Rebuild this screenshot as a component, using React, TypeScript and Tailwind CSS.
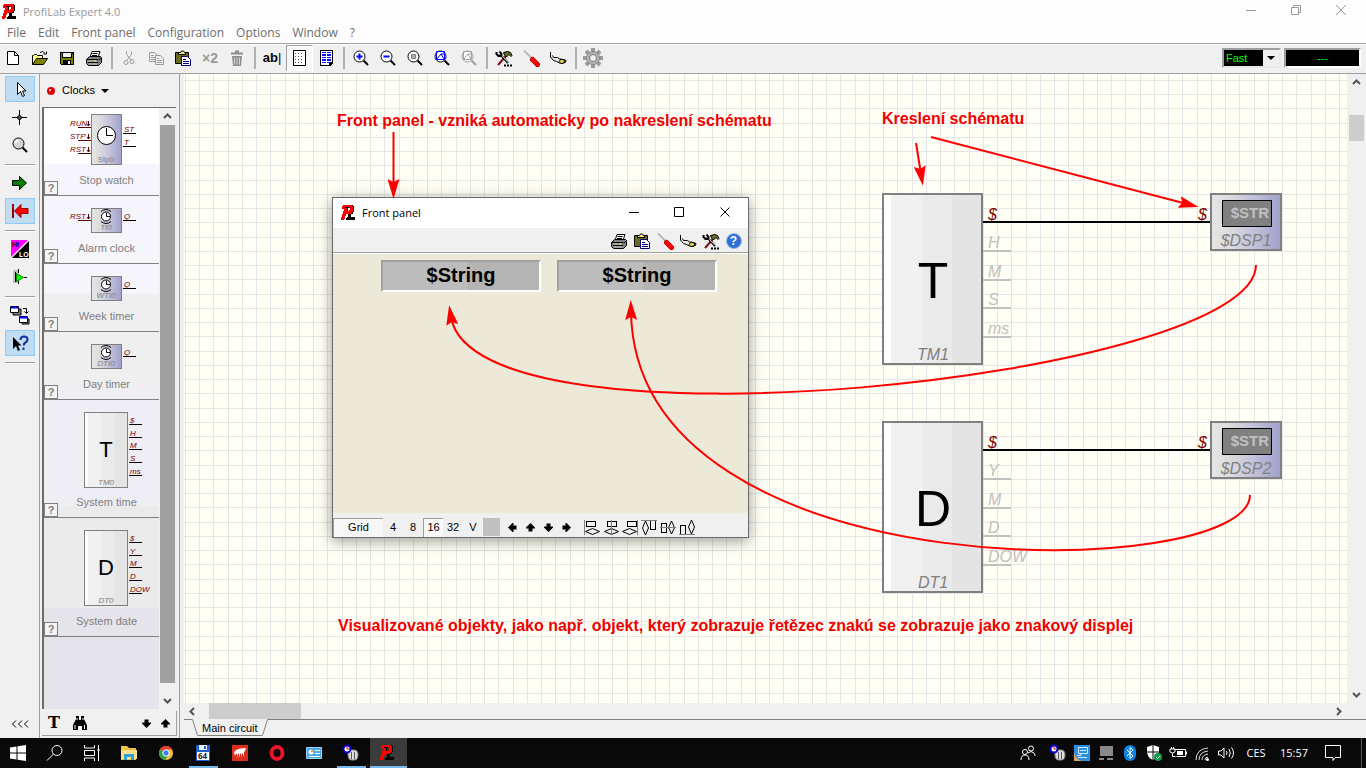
import type { ReactNode } from "react";
import clsx from "clsx";

type IconProps = { children: ReactNode; className?: string; size?: number };

const Icon = ({ children, className, size = 18 }: IconProps) => (
  <svg
    width={size}
    height={size}
    viewBox={`0 0 ${size} ${size}`}
    fill="none"
    aria-hidden="true"
    className={clsx("shrink-0", className)}
  >
    {children}
  </svg>
);

/* ---------- program icons ---------- */

// R = red, K = black
const logoRows = [
  "..RRRRRRRRRK..",
  ".RRRRRRRRRRRK.",
  ".RRRKKKKRRRRK.",
  ".RRRRRK..RRRK.",
  "...RRRK..RRRK.",
  "...RRRK.RRRRK.",
  "..RRRRRRRRRRK.",
  "..RRRRRRRRRK..",
  "..RRRRRRRRKK..",
  ".RRRR..KKK....",
  ".RRRR..KKK....",
  ".RRR...KKK....",
  "RRRR..KKKKKKKK",
  "RRRR.KKKKKKKKK",
  "RRR..KKKKKKKKK",
];

const Logo = () => (
  <Icon size={16}>
    <g shapeRendering="crispEdges">
      {logoRows.map((row, y) =>
        row.split("").map((c, x) =>
          c === "." ? null : (
            <rect
              key={`${x}-${y}`}
              x={x}
              y={y}
              width="1"
              height="1"
              fill={c === "R" ? "#f00" : "#000"}
            />
          )
        )
      )}
    </g>
  </Icon>
);

const NewIcon = () => (
  <Icon>
    <path d="M3.500 2.500h7l4 4v9h-11z" fill="#fff" stroke="#000" />
    <path d="M10.500 2.500v4h4" stroke="#000" />
  </Icon>
);

const OpenIcon = () => (
  <Icon>
    <path d="M1.500 15.500v-9h1l1-1h2l1 1h5v3" fill="#ffff80" stroke="#000" />
    <path d="M1.500 15.500l4-6h11l-4 6z" fill="#808000" stroke="#000" />
    <path d="M9 3.500q3-2.500 5 1m1.500-2v2.500h-3" stroke="#000" />
  </Icon>
);

const SaveIcon = () => (
  <Icon>
    <g shapeRendering="crispEdges">
      <path d="M2 3h14v13H3l-1-1z" fill="#000" />
      <path d="M3 4h1v5h10V5h1v10H3z" fill="#808000" />
      <path d="M5 4h8v4H5z" fill="#f0f0f0" />
      <path d="M5 11h8v5H5z" fill="#000" />
      <path d="M10 12h2v3h-2z" fill="#f0f0f0" />
    </g>
  </Icon>
);

const PrintIcon = () => (
  <Icon>
    <path d="M5 8.500l2-6h8l-2 6" fill="#fff" stroke="#000" />
    <path d="M7.500 4.500h5M7 6.500h5" stroke="#000" />
    <path d="M1.500 10.500l3-3h11l1 1v5l-3 3h-10l-2-2z" fill="#808080" stroke="#000" />
    <path d="M2 10.500h11M3 13.500h10M13.500 11l3-2" stroke="#000" />
    <path d="M3 12h9M4 15h8" stroke="#c8c8c8" />
    <path d="M9 12h2" stroke="#ff0" />
  </Icon>
);

const CutIcon = () => (
  <Icon>
    <path d="M6.500 2.500v3l5 6M11.500 2.500v3l-5 6" stroke="#9a9a9a" />
    <circle cx="6" cy="13.500" r="2" stroke="#9a9a9a" />
    <circle cx="12" cy="12.500" r="2" stroke="#9a9a9a" />
  </Icon>
);

const CopyIcon = () => (
  <Icon>
    <path d="M2.500 3.500h5l3 3v6h-8z" fill="#f0f0f0" stroke="#9a9a9a" />
    <path d="M4 6.500h3M4 8.500h5M4 10.500h5" stroke="#9a9a9a" />
    <path d="M8.500 6.500h5l3 3v6h-8z" fill="#f0f0f0" stroke="#9a9a9a" />
    <path d="M10 9.500h2M10 11.500h5M10 13.500h5" stroke="#9a9a9a" />
  </Icon>
);

const PasteIcon = () => (
  <Icon>
    <path d="M1.500 3.500h13v11h-13z" fill="#6b6b1e" stroke="#000" />
    <path d="M4.500 5.500v-2h2l1-1.500h2l1 1.500h1v2z" fill="#f5e77a" stroke="#000" />
    <path d="M7.500 7.500h6l3 3v6h-9z" fill="#fff" stroke="#000080" />
    <path d="M9 10.500h3M9 12.500h6M9 14.500h6" stroke="#000080" />
  </Icon>
);

const TrashIcon = () => (
  <Icon>
    <path d="M3 4.500h12M7 2.500h4" stroke="#8f8f8f" strokeWidth="2" />
    <path d="M4 7h10l-1 10H5z" fill="#8f8f8f" />
    <path d="M6.500 8.500v7M9 8.500v7M11.500 8.500v7" stroke="#d8d8d8" />
  </Icon>
);

const GridIcon = () => (
  <Icon>
    <path d="M3.500 1.500h12v15h-12z" fill="#fff" stroke="#000" />
    <path
      d="M5 4.500h9M5 7.500h9M5 10.500h9M5 13.500h9"
      stroke="#555"
      strokeDasharray="1 2"
    />
  </Icon>
);

const PagesIcon = () => (
  <Icon>
    <g shapeRendering="crispEdges">
      <path d="M3 1h13v13l-3 3H3z" fill="#000" />
      <path d="M4 2h11v11h-3v3H4z" fill="#fff" />
      <path
        d="M5 3h4v1H5zM10 3h4v1h-4zM5 5h4v2H5zM10 5h4v2h-4zM5 8h4v1H5zM10 8h4v1h-4zM5 10h4v2H5zM10 10h4v2h-4zM5 13h4v1H5zM10 13h2v1h-2z"
        fill="#1010ff"
      />
    </g>
  </Icon>
);

const ZoomIcon = ({ kind }: { kind: "in" | "out" | "sel" | "fit" | "off" | "glass" }) => {
  const line = kind === "off" ? "#a0a0a0" : "#000";
  return (
    <Icon>
      <path d="M11.500 11.500l4.500 4.500" stroke={line} strokeWidth="2" />
      <circle
        cx="7.500"
        cy="7.500"
        r="5.500"
        fill={kind === "glass" ? "#d4d4d4" : "#fff"}
        stroke={line}
      />
      {kind === "in" && <path d="M4.500 7.500h6M7.500 4.500v6" stroke="#00f" strokeWidth="2" />}
      {kind === "out" && <path d="M4.500 7.500h6" stroke="#00f" strokeWidth="2" />}
      {kind === "sel" && <path d="M5.500 5.500h4v4h-4z" fill="#b0b0b0" stroke="#808080" />}
      {(kind === "fit" || kind === "off") && (
        <path
          d="M3.500 2.500h8v8h-8zM4 10l4-5 3 5M8 5h3"
          stroke={kind === "fit" ? "#00f" : "#a0a0a0"}
        />
      )}
      {kind === "glass" && <path d="M4.500 7.500q.5-3 3-3" stroke="#fff" strokeWidth="2" />}
    </Icon>
  );
};

const ToolsIcon = () => (
  <Icon>
    <path d="M11 7l-8 9" stroke="#7a1010" strokeWidth="2" />
    <path d="M5 5l8 9" stroke="#000" strokeWidth="2" />
    <path d="M6 5.500l7 8" stroke="#d0d0d0" />
    <path d="M1.500 3v2l2 2h2l1-2-2-2.500" stroke="#000" strokeWidth="2" />
    <path d="M8.500 3.500l4-1 3 1 1.500 3-1 1-2-2-2.500 2.500-2-2z" fill="#6b6b1e" stroke="#000" />
    <path d="M9 16.500h8" stroke="#000" strokeWidth="2" strokeDasharray="2 1" />
  </Icon>
);

const ScrewdriverIcon = () => (
  <Icon>
    <path d="M2 1.500l8 8" stroke="#b8b8b8" strokeWidth="2" />
    <path d="M1.500 3l7 7" stroke="#ececec" />
    <path d="M10.500 10.500l5 5" stroke="#900000" strokeWidth="5" strokeLinecap="round" />
    <path d="M10.500 10.500l5 5" stroke="#f00" strokeWidth="4" strokeLinecap="round" />
  </Icon>
);

const PlugIcon = () => (
  <Icon>
    <path
      d="M1.500 3v5l3 3.500 3 1 4 2 5-1 .5-2-2.500-1-4-.5-2-1.500h-4l-1-2"
      fill="#e8e8e8"
      stroke="#000"
    />
    <path d="M10 12.500l2-2.500 4 1.500-1 2.500-3 .5z" fill="#e4d64a" stroke="#000" />
  </Icon>
);

const GearIcon = () => (
  <Icon size={20}>
    <path d="M10 0v20M0 10h20M3 3l14 14M17 3L3 17" stroke="#9a9a9a" strokeWidth="4" />
    <circle cx="10" cy="10" r="6.500" fill="#b4b4b4" stroke="#8a8a8a" />
    <circle cx="10" cy="10" r="3.500" fill="#f0f0f0" stroke="#777" />
  </Icon>
);

const HelpIcon = () => (
  <span className="flex size-4 items-center justify-center rounded-full border border-[#9ab6e4] bg-[#2f6fd6] text-xs font-bold text-white">
    ?
  </span>
);

/* ---------- tool strip ---------- */

const strip: { name: string; icon: ReactNode; on?: boolean }[][] = [
  [
    {
      name: "Select",
      on: true,
      icon: (
        <Icon>
          <path d="M6.500 2.500v12l3-3 2 5 2-1-2-4.500h3.500z" fill="#fff" stroke="#000" />
        </Icon>
      ),
    },
    {
      name: "Crosshair",
      icon: (
        <Icon>
          <path d="M8.500 2v15M1 9.500h15" stroke="#000" />
          <circle cx="8.500" cy="9.500" r="2" fill="#555" stroke="#000" />
        </Icon>
      ),
    },
    { name: "Zoom", icon: <ZoomIcon kind="glass" /> },
  ],
  [
    {
      name: "Run",
      icon: (
        <Icon>
          <path d="M1.500 6.500h7v-4l7 6.500-7 6.500v-4h-7z" fill="#008000" stroke="#000" />
        </Icon>
      ),
    },
    {
      name: "Stop",
      on: true,
      icon: (
        <Icon>
          <path d="M2 2v14" stroke="#900" strokeWidth="2" />
          <path d="M17 6.500h-7v-4L3.500 9l6.500 6.500v-4h7z" fill="#f00" stroke="#900" />
        </Icon>
      ),
    },
  ],
  [
    {
      name: "High low",
      icon: (
        <Icon>
          <path d="M0 0h17L0 17z" fill="#f0f" />
          <path d="M18 1v17H1z" fill="#000" />
          <text x="1" y="7" fontSize="7" fontWeight="bold" fill="#000">HI</text>
          <text x="8" y="17" fontSize="7" fontWeight="bold" fill="#fff">LO</text>
        </Icon>
      ),
    },
    {
      name: "Probe",
      icon: (
        <Icon>
          <path d="M2 2h5v13H2z" fill="#c0c0c0" />
          <path d="M7.500 1v4M7.500 13v3M4.500 4v10M13 9.500h3" stroke="#000" />
          <path d="M5.500 5.500l7 4-7 4z" fill="#0f0" stroke="#008000" />
        </Icon>
      ),
    },
  ],
  [
    {
      name: "Switch windows",
      icon: (
        <Icon size={20}>
          <path d="M3 4h8v6H3z" fill="#808080" stroke="#000" />
          <path d="M.500 1.500h8v6h-8z" fill="#fff" stroke="#000" />
          <path d="M1 2.500h7" stroke="#00f" strokeWidth="2" />
          <path d="M13 3.500h3.500V8m-2-1.500l2 2 2-2" stroke="#000" />
          <path d="M12 14h7v5h-7z" fill="#808080" stroke="#000" />
          <path d="M9.500 11.500h8v6h-8z" fill="#fff" stroke="#000" />
          <path d="M10 12.500h7" stroke="#00f" strokeWidth="2" />
        </Icon>
      ),
    },
    {
      name: "Context help",
      on: true,
      icon: (
        <Icon>
          <path d="M2 3v12l3-3 2 5 2-1-2-4.500h3.500z" fill="#000" />
          <path
            d="M9.500 6q0-3.500 3.500-3.500t3.500 3q0 2-2 3t-1.500 3M12.500 13.500v2.500"
            stroke="#1c2fa0"
            strokeWidth="2"
          />
        </Icon>
      ),
    },
  ],
];

const ToolStrip = () => (
  <nav
    aria-label="Tools"
    className="flex w-10 shrink-0 flex-col items-center border-r border-[#a0a0a0] pt-[2px]"
  >
    {strip.map((group, i) => (
      <div key={i} className="flex w-full flex-col items-center gap-[2px]">
        {group.map(({ name, icon, on }) => (
          <button
            key={name}
            aria-label={name}
            aria-pressed={on}
            className={clsx(
              "flex h-[26px] w-[30px] items-center justify-center border",
              on ? "border-[#90c8f6] bg-[#c0dcf3]" : "border-transparent"
            )}
          >
            {icon}
          </button>
        ))}
        <hr className="my-1 w-[30px] border-t border-b border-t-[#a0a0a0] border-b-white" />
      </div>
    ))}
    <button className="mt-auto mb-[5px]" aria-label="Collapse">
      <Icon>
        <path
          d="M5 5.500L1.500 9 5 12.500M11 5.500L7.500 9l3.500 3.500M17 5.500L13.500 9l3.500 3.500"
          stroke="#000"
        />
      </Icon>
    </button>
  </nav>
);

/* ---------- component palette ---------- */

type Part = {
  name: string;
  id: string;
  kind: "stop" | "timer" | "table";
  height: number;
  letter?: string;
  left?: string[];
  right: string[];
};

const parts: Part[] = [
  { name: "Stop watch", id: "Stp0", kind: "stop", height: 61, left: ["RUN", "STP", "RST"], right: ["ST", "T"] },
  { name: "Alarm clock", id: "TI0", kind: "timer", height: 41, left: ["RST"], right: ["Q"] },
  { name: "Week timer", id: "WTI0", kind: "timer", height: 41, right: ["Q"] },
  { name: "Day timer", id: "DTI0", kind: "timer", height: 41, right: ["Q"] },
  { name: "System time", id: "TM0", kind: "table", height: 91, letter: "T", right: ["$", "H", "M", "S", "ms"] },
  { name: "System date", id: "DT0", kind: "table", height: 92, letter: "D", right: ["$", "Y", "M", "D", "DOW"] },
];

const Gradients = () => (
  <defs>
    <linearGradient id="violet">
      <stop offset="0" stopColor="#e6e6e6" />
      <stop offset=".25" stopColor="#dcdcde" />
      <stop offset=".6" stopColor="#c2c2da" />
      <stop offset="1" stopColor="#a0a0cc" />
    </linearGradient>
    <linearGradient id="silver">
      <stop offset=".08" stopColor="#fff" />
      <stop offset=".08" stopColor="#f0f0f0" />
      <stop offset=".4" stopColor="#f0f0f0" />
      <stop offset=".4" stopColor="#eaeaea" />
      <stop offset=".7" stopColor="#eaeaea" />
      <stop offset=".7" stopColor="#e4e4e4" />
    </linearGradient>
  </defs>
);

const PartSymbol = ({ part }: { part: Part }) => {
  const table = part.kind === "table";
  const stop = part.kind === "stop";
  const first = stop ? 25 : 24;
  const pinX = table ? 85 : 79;
  return (
    <svg width="114" height={part.height} aria-hidden="true" className="shrink-0 text-[8px] italic">
      {table ? (
        <rect x="40.5" y="12.5" width="43" height="75" fill="url(#silver)" stroke="#808080" />
      ) : (
        <rect
          x="47.5"
          y={stop ? 6.5 : 12.5}
          width="30"
          height={stop ? 50 : 24}
          fill="url(#violet)"
          stroke="#808080"
        />
      )}
      {stop && (
        <>
          <circle cx="62.5" cy="27.5" r="9" fill="#fff" stroke="#000" />
          <path d="M62.500 20v7.500H69" stroke="#000" fill="none" />
        </>
      )}
      {part.kind === "timer" && (
        <>
          <path d="M57 15.500q5-4 10 0M57 25.500q5 4 10 0" stroke="#000" fill="none" />
          <circle cx="62" cy="20.5" r="4.5" fill="#fff" stroke="#000" />
          <path d="M62.500 17v3.500H66" stroke="#000" fill="none" />
        </>
      )}
      {table && (
        <text x="62" y="57" fontSize="22" textAnchor="middle" className="not-italic">
          {part.letter}
        </text>
      )}
      <text
        x="62"
        y={table ? 85 : stop ? 54 : 34}
        textAnchor="middle"
        fill="#808080"
        className={stop ? "not-italic" : ""}
      >
        {part.id}
      </text>
      {part.left?.map((pin, i) => {
        const y = (stop ? 19 : 24) + i * 13;
        return (
          <g key={pin}>
            <text x="26" y={y - 1} fill="#800000">{pin}</text>
            <path
              d={`M34 ${y + 0.5}h13M44.500 ${y - 6}v5m-1.500-2l1.500 2 1.500-2`}
              stroke="#500"
              fill="none"
            />
          </g>
        );
      })}
      {part.right.map((pin, i) => {
        const y = first + i * 13 - (table && i > 1 ? 1 : 0);
        return (
          <g key={pin}>
            <text x={pinX + 1} y={y - 1} fill="#800000">{pin}</text>
            <path d={`M${pinX} ${y + 0.5}h13`} stroke="#000" />
          </g>
        );
      })}
    </svg>
  );
};

const Chevron = ({ turn }: { turn?: string }) => (
  <svg width="9" height="9" viewBox="0 0 9 9" fill="none" className={turn} aria-hidden="true">
    <path d="M1 6l3.500-3.500L8 6" stroke="#555" strokeWidth="2" />
  </svg>
);

const BlockArrow = ({ turn }: { turn?: string }) => (
  <svg width="9" height="9" viewBox="0 0 9 9" className={turn} aria-hidden="true">
    <path d="M4.500 0L9 4.500V5.500H6.500V8.500h-4v-3H0v-1z" fill="#000" />
  </svg>
);

const Palette = () => (
  <aside className="flex w-[140px] shrink-0 flex-col border-r border-[#a0a0a0] pl-[2px]">
    <button className="flex h-[33px] items-center pl-1 text-[11px]">
      <svg width="10" height="10" aria-hidden="true">
        <circle cx="5" cy="5" r="4" fill="#e00000" />
        <circle cx="4" cy="4" r="1" fill="#fff" />
      </svg>
      <span className="ml-[6px]">Clocks</span>
      <span className="ml-[6px] border-x-4 border-t-4 border-x-transparent border-t-black" />
    </button>
    <div className="mr-[3px] flex min-h-0 flex-1 border-t border-l-2 border-[#6d6d6d]">
      <ul className="min-w-0 flex-1 bg-[linear-gradient(#fff_56px,#f5f5fb_56px,#f5f5fb_186px,#efefef_186px,#efefef_278px,#eeeef4_278px,#eeeef4_398px,#ebebeb_398px,#ebebeb_500px,#e4e4ea_500px)]">
        {parts.map((part) => (
          <li key={part.id} className="flex flex-col border-b border-[#808080]">
            <PartSymbol part={part} />
            <div className="flex h-[26px] items-end">
              <button
                aria-label={`About ${part.name}`}
                className="flex size-[14px] shrink-0 items-center justify-center border border-[#808080] bg-[#f4f4f4] text-[11px] font-bold text-[#808080]"
              >
                ?
              </button>
              <span className="flex-1 pr-1 pb-[7px] text-center text-[11px] leading-4 whitespace-nowrap text-[#808080]">
                {part.name}
              </span>
            </div>
          </li>
        ))}
      </ul>
      <div className="flex w-[17px] flex-col items-center border-x border-[#f0f0f0]">
        <button aria-label="Scroll up" className="flex h-[17px] items-center"><Chevron /></button>
        <div className="w-full flex-1 bg-[#a0a0a0]" />
        <div className="h-[9px]" />
        <button aria-label="Scroll down" className="flex h-[17px] items-center">
          <Chevron turn="rotate-180" />
        </button>
      </div>
    </div>
    <div className="my-[2px] mr-[2px] flex h-[25px] items-center border-r border-b border-[#a0a0a0] pl-[2px]">
      <button className="w-5 font-['DejaVu_Serif',serif] text-base leading-5 font-bold">T</button>
      <button aria-label="Find" className="ml-2">
        <Icon size={16}>
          <path d="M4 1h3v4h2V1h3v3l3 6v5h-5v-4H6v4H1v-5l3-6z" fill="#000" />
          <path d="M5 3v2M11 3v2M3 10v4M12.500 10v4" stroke="#fff" />
        </Icon>
      </button>
      <button aria-label="Next" className="mr-[10px] ml-auto"><BlockArrow turn="rotate-180" /></button>
      <button aria-label="Previous" className="mr-[6px]"><BlockArrow /></button>
    </div>
  </aside>
);

/* ---------- front panel window ---------- */

const AlignIcon = ({ kind }: { kind: number }) => (
  <Icon size={17}>
    {kind < 3 ? (
      <>
        <rect x={[2.5, 4.5, 5.5][kind]} y="2.5" width="9" height="5" stroke="#000" />
        <path
          d={["M1.500 12.500l7-3 7 3-7 3z", "M1.500 12.500l7-3 7 3-7 3z", "M.5 12.500l7-3 7 3-7 3z"][kind]}
          stroke="#000"
        />
        <path d={["M.5 1v15", "M8.500 1v15", "M15.500 1v15"][kind]} stroke="#808080" />
      </>
    ) : (
      <>
        <path
          d={["M4.500 2l3 7-3 7-3-7z", "M11.500 2l3 6.500-3 6.500-3-6.500z", "M12.500 1l3 7-3 7-3-7z"][kind - 3]}
          stroke="#000"
        />
        <rect
          x={[9.5, 1.5, 1.5][kind - 3]}
          y={[1.5, 4.5, 6.5][kind - 3]}
          width="5"
          height="9"
          stroke="#000"
        />
        <path d={["M0 1.500h16", "M0 8.500h16", "M0 15.500h16"][kind - 3]} stroke="#808080" />
      </>
    )}
  </Icon>
);

const panelTools: { name: string; icon: ReactNode }[] = [
  { name: "Print", icon: <PrintIcon /> },
  { name: "Paste", icon: <PasteIcon /> },
  { name: "Setup", icon: <ScrewdriverIcon /> },
  { name: "Connect", icon: <PlugIcon /> },
  { name: "Tools", icon: <ToolsIcon /> },
  { name: "Help", icon: <HelpIcon /> },
];

const FrontPanel = () => (
  <section
    aria-label="Front panel"
    className="absolute top-[123px] left-[148px] flex h-[341px] w-[417px] flex-col border border-[#6a6a6a] bg-[#ece9d8] shadow-[0_3px_14px_rgba(0,0,0,0.4)]"
  >
    <header className="flex h-[30px] shrink-0 items-center bg-white pl-2">
      <Logo />
      <h2 className="ml-[5px] font-['Open_Sans',sans-serif] text-[11px]">Front panel</h2>
      <div className="ml-auto flex pb-[2px]">
        <button aria-label="Minimize" className="flex w-[46px] justify-center">
          <Icon size={11}><path d="M0 5.500h10" stroke="#000" /></Icon>
        </button>
        <button aria-label="Maximize" className="flex w-[45px] justify-center">
          <Icon size={11}><path d="M.5.5h9v9H.5z" stroke="#000" /></Icon>
        </button>
        <button aria-label="Close" className="flex w-[46px] justify-center">
          <Icon size={11}><path d="M.5.5l9 9M9.500.5l-9 9" stroke="#000" /></Icon>
        </button>
      </div>
    </header>
    <div className="flex h-[25px] shrink-0 items-center justify-end border-b border-[#a0a0a0] bg-[#f0f0f0] pt-px pr-[3px]">
      {panelTools.map(({ name, icon }) => (
        <button key={name} aria-label={name} className="flex w-[23px] justify-center">
          {icon}
        </button>
      ))}
    </div>
    <div className="flex flex-1 items-start gap-4 border-t border-white pt-[6px] pl-12">
      {[1, 2].map((n) => (
        <output
          key={n}
          className="flex h-8 w-40 items-center justify-center border-2 border-t-[#a0a0a0] border-r-white border-b-white border-l-[#a0a0a0] bg-[linear-gradient(90deg,#bcbcbc_54%,#b4b4b4_54%)] pb-[2px] text-xl font-bold"
        >
          $String
        </output>
      ))}
    </div>
    <footer className="flex h-6 shrink-0 items-center bg-[#f0f0f0] pt-1 text-[11px]">
      <button className="h-[19px] w-[50px] border-t border-l border-[#a0a0a0] bg-[#f8f8f8]">Grid</button>
      {["4", "8", "16", "32", "V"].map((step) => (
        <button
          key={step}
          className={clsx(
            "h-[19px] w-5",
            step === "16" && "border-t border-l border-[#a0a0a0] bg-[#f8f8f8]"
          )}
        >
          {step}
        </button>
      ))}
      <span className="mr-[3px] h-[18px] w-[17px] bg-[#c0c0c0]" />
      {["-rotate-90", "rotate-0", "rotate-180", "rotate-90"].map((turn) => (
        <button key={turn} aria-label="Move" className="flex w-[18px] justify-center">
          <BlockArrow turn={turn} />
        </button>
      ))}
      <div className="ml-2 flex">
        {[0, 1, 2, 3, 4, 5].map((kind) => (
          <button key={kind} aria-label="Align" className="flex w-[19px] justify-center">
            <AlignIcon kind={kind} />
          </button>
        ))}
      </div>
    </footer>
  </section>
);

/* ---------- schematic ---------- */

const blocks = [
  { y: 120, letter: "T", id: "TM1", display: "$DSP1", pins: ["H", "M", "S", "ms"] },
  { y: 348, letter: "D", id: "DT1", display: "$DSP2", pins: ["Y", "M", "D", "DOW"] },
];

const Schematic = () => (
  <svg className="absolute inset-0 h-full w-full" role="img" aria-label="Circuit">
    <Gradients />
    <defs>
      <pattern id="grid" x="1" y="6" width="57" height="57" patternUnits="userSpaceOnUse">
        <path
          d="M.5 0v57M14.500 0v57M28.500 0v57M43.500 0v57M0 .5h57M0 14.500h57M0 28.500h57M0 43.500h57"
          stroke="#e5e5e5"
        />
      </pattern>
    </defs>
    <rect width="100%" height="100%" fill="url(#grid)" />
    {blocks.map(({ y, letter, id, display, pins }) => (
      <g key={id} transform={`translate(698 ${y - 1})`} fontSize="16">
        <rect x="1" y="1" width="99" height="170" fill="url(#silver)" stroke="#808080" strokeWidth="2" />
        <text x="51" y="105" fontSize="50" textAnchor="middle">{letter}</text>
        <text x="51" y="167" textAnchor="middle" fill="#808080" fontStyle="italic">{id}</text>
        <path d="M101 29h228" stroke="#000" strokeWidth="2" />
        <text x="106" y="27" fill="#800000" fontStyle="italic">$</text>
        <text x="316" y="27" fill="#800000" fontStyle="italic">$</text>
        {pins.map((pin, i) => (
          <g key={pin}>
            <path d={`M101 ${58 + Math.round(i * 28.5)}h28`} stroke="#c0c0c0" strokeWidth="2" />
            <text x="106" y={55 + Math.round(i * 28.5)} fill="#c0c0c0" fontStyle="italic">{pin}</text>
          </g>
        ))}
        <rect x="329" y="1" width="70" height="56" fill="url(#violet)" stroke="#808080" strokeWidth="2" />
        <rect x="340.5" y="7.5" width="49" height="26" fill="#808080" stroke="#000" />
        <text x="387" y="25" fontSize="15" fontWeight="bold" textAnchor="end" fill="#c0c0c0">$STR</text>
        <text x="364" y="53" textAnchor="middle" fill="#808080" fontStyle="italic">{display}</text>
      </g>
    ))}
  </svg>
);

const Notes = () => (
  <svg
    className="pointer-events-none absolute inset-0 h-full w-full"
    fontSize="16"
    fontWeight="bold"
    fill="#f00000"
  >
    <defs>
      <marker
        id="head"
        markerWidth="20"
        markerHeight="12"
        refX="8"
        refY="6"
        orient="auto"
        markerUnits="userSpaceOnUse"
      >
        <path d="M0 0l20 6-20 6 3-6z" fill="#f00" />
      </marker>
    </defs>
    <g transform="translate(-184 -74)">
      <text x="337" y="126">Front panel - vzniká automaticky po nakreslení schématu</text>
      <text x="882" y="124">Kreslení schématu</text>
      <text x="338" y="631">
        Visualizované objekty, jako např. objekt, který zobrazuje řetězec znakú se zobrazuje jako znakový displej
      </text>
      <g fill="none" stroke="#f00" strokeWidth="2">
        <path d="M393.500 132V187" markerEnd="url(#head)" />
        <path d="M916 143L921 174" markerEnd="url(#head)" />
        <path d="M931 137L1187 204" markerEnd="url(#head)" />
        <path d="M1256 265C1256 378 474 461 451 317" markerEnd="url(#head)" />
        <path d="M1250 495C1250 582 636 596 631 312" markerEnd="url(#head)" />
      </g>
    </g>
  </svg>
);

/* ---------- taskbar ---------- */

const PeopleIcon = () => (
  <Icon>
    <g stroke="#fff">
      <circle cx="6" cy="8" r="2.500" />
      <path d="M2 16q0-5 4-5t4 5" />
      <circle cx="12" cy="4.500" r="2.500" />
      <path d="M9 9q3-3 6 0 1 1 1 3" />
    </g>
  </Icon>
);

const MouseIcon = () => (
  <Icon>
    <path d="M6 9q0-3 3-3h3q4 0 4 5t-4 5h-2q-4 0-4-5z" fill="#ddd" stroke="#888" />
    <path d="M9.500 8v7M12.500 8v7" stroke="#555" />
    <circle cx="5" cy="5" r="3.500" fill="#fff" stroke="#0000d0" strokeWidth="2" />
    <path d="M5 2.500V5h2.500" stroke="#d00" />
  </Icon>
);

const tasks: { name: string; icon: ReactNode; open?: boolean; active?: boolean }[] = [
  {
    name: "Start",
    icon: (
      <Icon>
        <path
          d="M1 3.500L7.500 2.500V8.500H1zM8.500 2.300L17 1v7.500H8.500zM1 9.500h6.500v6L1 14.500zM8.500 9.500H17V17l-8.500-1.300z"
          fill="#fff"
        />
      </Icon>
    ),
  },
  {
    name: "Search",
    icon: (
      <Icon>
        <circle cx="11" cy="6.500" r="5" stroke="#fff" />
        <path d="M7.500 10L1 16.500" stroke="#fff" />
      </Icon>
    ),
  },
  {
    name: "Task view",
    icon: (
      <Icon>
        <path
          d="M1.500 1v3h10V1M1.500 17v-3h10v3M1.500 6.500h10v5h-10zM15.500 1v16M14 6h3"
          stroke="#fff"
        />
      </Icon>
    ),
  },
  {
    name: "Explorer",
    icon: (
      <Icon>
        <path d="M1 2h6l2 2h7v12H1z" fill="#f0c14b" />
        <path d="M1 6h16v9H1z" fill="#ffe08a" />
        <path d="M4 16v-6h10v6h-3v-3H7v3z" fill="#2f9fdb" />
      </Icon>
    ),
  },
  {
    name: "Chrome",
    icon: (
      <Icon>
        <circle cx="9" cy="9" r="7" fill="#fbc02d" />
        <path d="M9 9L2.900 5.500A7 7 0 0 1 15.100 5.500H9z" fill="#e53935" />
        <path d="M9 9l-6.100-3.500A7 7 0 0 0 8.500 16l3-5.500z" fill="#2e9e4f" />
        <circle cx="9" cy="9" r="3.200" fill="#3b7ded" stroke="#fff" />
      </Icon>
    ),
  },
  {
    name: "Commander",
    open: true,
    icon: (
      <Icon>
        <path d="M2 1h14v16H2z" fill="#1f5fd0" />
        <path d="M5 1h8v5H5z" fill="#e8eefc" />
        <path d="M10 2h2v3h-2z" fill="#1f5fd0" />
        <path d="M3 8h12v8H3z" fill="#fff" />
        <text x="4" y="15" fontSize="8" fontWeight="bold" fill="#222">64</text>
      </Icon>
    ),
  },
  {
    name: "Editor",
    icon: (
      <Icon>
        <path d="M1 1h16v16H1z" fill="#dc2d1e" />
        <path
          d="M3 8q3-4 12-4l-1 3-1 1v5l-1-3-1-1v4l-1-3-1-1v5l-1-4-1-1v5l-1-4H5l-1 2z"
          fill="#fff"
        />
      </Icon>
    ),
  },
  {
    name: "Opera",
    icon: (
      <Icon>
        <ellipse cx="9" cy="9" rx="5.500" ry="6" stroke="#e8152a" strokeWidth="4" />
      </Icon>
    ),
  },
  {
    name: "Control panel",
    icon: (
      <Icon>
        <path d="M1.500 3.500h15v11h-15z" fill="#4aa8e8" stroke="#9ad4fa" />
        <circle cx="6" cy="8" r="2.500" fill="#fff" />
        <path d="M6 8V5.500A2.500 2.500 0 0 1 8.500 8z" fill="#f5a623" />
        <path d="M10 6.500h5M10 9.500h5M4 12.500h11" stroke="#fff" />
      </Icon>
    ),
  },
  { name: "Recorder", open: true, icon: <MouseIcon /> },
  { name: "ProfiLab", open: true, active: true, icon: <Logo /> },
];

const tray: { name: string; icon: ReactNode }[] = [
  { name: "Recorder", icon: <MouseIcon /> },
  {
    name: "Graphics",
    icon: (
      <Icon>
        <path d="M1 1h16v16H1z" fill="#2b8fe0" />
        <path d="M5.500 3.500h9v6h-9zM7 6.500h6M8 9.500v2h-4M5 13.500h9" stroke="#cfeaff" />
        <path d="M1 8q1 7 8 9H1z" fill="#e0a560" />
      </Icon>
    ),
  },
  {
    name: "Display",
    icon: (
      <Icon>
        <path d="M3 2h13v10H3zM2 14h5v2H2zM10 14h6v2h-6z" fill="#8a8a8a" />
      </Icon>
    ),
  },
  {
    name: "Bluetooth",
    icon: (
      <Icon>
        <rect x="3" y="1" width="12" height="16" rx="6" fill="#0a84e8" />
        <path d="M6 6l6 6-3 2.500v-11l3 2.500-6 6" stroke="#fff" />
      </Icon>
    ),
  },
  {
    name: "Security",
    icon: (
      <Icon>
        <path d="M8 1l6 2v5q0 5-6 8-6-3-6-8V3z" fill="#fff" />
        <path d="M8 1v15M2 8h12" stroke="#0b0b0b" />
        <circle cx="13" cy="13" r="4" fill="#12994a" />
        <path d="M11 13l1.500 1.500L15 12" stroke="#fff" />
      </Icon>
    ),
  },
  {
    name: "Battery",
    icon: (
      <Icon>
        <path
          d="M5.500 5.500h11v7h-9M1 5h5v3q-2.500 2-5 0zM2.500 3v2M4.500 3v2M3.500 9v3.500h3M17.500 7.500v3"
          stroke="#fff"
        />
        <path d="M8 7h6v4H8z" fill="#fff" />
      </Icon>
    ),
  },
  {
    name: "Network",
    icon: (
      <Icon>
        <path d="M3 16Q3 5 15 4M6 16q0-8 9-9M9 16q0-5 6-6M12 16q0-3 3-3" stroke="#ddd" />
        <circle cx="14.500" cy="15.500" r="1.500" fill="#fff" />
      </Icon>
    ),
  },
  {
    name: "Volume",
    icon: (
      <Icon>
        <path
          d="M1.500 7v4H4l3 3V4L4 7zM9.500 7q1 2 0 4M12 5q2.500 4 0 8M14.500 3.500q4 5.500 0 11"
          stroke="#fff"
        />
      </Icon>
    ),
  },
];

const Taskbar = () => (
  <footer className="flex h-[30px] shrink-0 items-stretch bg-[#090909] font-['Open_Sans',sans-serif] text-[11px] text-white">
    {tasks.map(({ name, icon, open, active }) => (
      <button
        key={name}
        aria-label={name}
        className={clsx("relative flex w-[37px] items-center justify-center pr-px", active && "bg-[#3b3b3b]")}
      >
        {icon}
        {open && (
          <span
            className={clsx("absolute bottom-0 h-[2px] bg-[#76b9ed]", active ? "inset-x-0" : "inset-x-1")}
          />
        )}
      </button>
    ))}
    <div className="ml-auto flex items-stretch">
      <button aria-label="People" className="flex w-9 items-center justify-center"><PeopleIcon /></button>
      {tray.map(({ name, icon }) => (
        <button key={name} aria-label={name} className="flex w-6 items-center justify-center">{icon}</button>
      ))}
      <button className="w-9">CES</button>
      <time className="flex w-10 items-center justify-center">15:57</time>
      <button aria-label="Notifications" className="mr-[9px] flex w-[38px] items-center justify-center">
        <Icon>
          <path d="M1.500 1.500h15v12h-5l-2.500 3v-3h-7.500z" stroke="#fff" />
        </Icon>
      </button>
      <span className="mr-1 w-px bg-[#555]" />
    </div>
  </footer>
);

/* ---------- main window ---------- */

const toolbar: { name: string; icon: ReactNode; on?: boolean }[][] = [
  [
    { name: "New", icon: <NewIcon /> },
    { name: "Open", icon: <OpenIcon /> },
    { name: "Save", icon: <SaveIcon /> },
    { name: "Print", icon: <PrintIcon /> },
  ],
  [
    { name: "Cut", icon: <CutIcon /> },
    { name: "Copy", icon: <CopyIcon /> },
    { name: "Paste", icon: <PasteIcon /> },
    { name: "Duplicate", icon: <span className="text-sm font-bold text-[#9a9a9a]">×2</span> },
    { name: "Delete", icon: <TrashIcon /> },
  ],
  [
    {
      name: "Text",
      icon: (
        <span className="text-[13px] font-bold">
          ab<span className="font-normal">|</span>
        </span>
      ),
    },
    { name: "Grid", icon: <GridIcon />, on: true },
    { name: "Pages", icon: <PagesIcon /> },
  ],
  [
    { name: "Zoom in", icon: <ZoomIcon kind="in" /> },
    { name: "Zoom out", icon: <ZoomIcon kind="out" /> },
    { name: "Zoom selection", icon: <ZoomIcon kind="sel" /> },
    { name: "Zoom fit", icon: <ZoomIcon kind="fit" /> },
    { name: "Zoom back", icon: <ZoomIcon kind="off" /> },
  ],
  [
    { name: "Tools", icon: <ToolsIcon /> },
    { name: "Setup", icon: <ScrewdriverIcon /> },
    { name: "Connect", icon: <PlugIcon /> },
  ],
  [{ name: "Options", icon: <GearIcon /> }],
];

const Toolbar = () => (
  <div className="flex h-[31px] shrink-0 items-center border-y border-[#a0a0a0] pb-px shadow-[inset_0_1px_#fff]">
    {toolbar.map((group, i) => (
      <div key={i} className="flex items-center">
        {i > 0 && <span className="mx-[3px] h-[22px] w-[2px] bg-[#b0b0b0]" />}
        {group.map(({ name, icon, on }) => (
          <button
            key={name}
            aria-label={name}
            className={clsx(
              "flex h-[26px] w-[27px] items-center justify-center border pr-px",
              on ? "border-[#a0a0a0] border-r-white border-b-white bg-[#f8f8f8]" : "border-transparent"
            )}
          >
            {icon}
          </button>
        ))}
      </div>
    ))}
    <div className="ml-auto flex h-5 w-[59px] items-stretch border-2 border-[#a0a0a0] border-r-[#e8e8e8] border-b-[#e8e8e8] bg-black">
      <div className="relative flex flex-1">
        <select
          aria-label="Speed"
          className="block h-4 w-full appearance-none bg-black p-0 pl-[2px] text-[11px] leading-4 text-[#00ff00] outline-none"
        >
          <option>Fast</option>
        </select>
        <span className="pointer-events-none absolute inset-y-0 right-0 flex w-4 items-center justify-center bg-[#f0f0f0]">
          <span className="border-x-4 border-t-4 border-x-transparent border-t-black" />
        </span>
      </div>
    </div>
    <output className="mr-[5px] ml-[3px] flex h-5 w-[77px] items-center justify-center border-2 border-[#a0a0a0] border-r-white border-b-white bg-black text-[11px] text-[#00ff00]">
      ---
    </output>
  </div>
);

const menu = ["File", "Edit", "Front panel", "Configuration", "Options", "Window", "?"];

const App = () => (
  <div className="flex h-screen flex-col overflow-hidden bg-[#f0f0f0] font-['Liberation_Sans',Arial,sans-serif] text-black">
    <header className="flex h-6 shrink-0 items-center bg-[#fdfdfd] pl-[2px] font-['Open_Sans',sans-serif] text-[11px] text-[#999]">
      <Logo />
      <h1 className="ml-[5px]">ProfiLab Expert 4.0</h1>
      <div className="ml-auto flex h-full items-center pb-1">
        <button aria-label="Minimize" className="flex w-[45px] justify-center">
          <Icon size={10}><path d="M0 5.500h10" stroke="#999" /></Icon>
        </button>
        <button aria-label="Restore" className="flex w-[45px] justify-center">
          <Icon size={10}><path d="M.5 2.500h7v7h-7zM2.500 2V.5h7v7H8" stroke="#999" /></Icon>
        </button>
        <button aria-label="Close" className="mr-[2px] flex w-[46px] justify-center">
          <Icon size={10}><path d="M0 0l10 10M10 0L0 10" stroke="#999" /></Icon>
        </button>
      </div>
    </header>
    <nav className="flex h-[19px] shrink-0 items-center gap-3 bg-[#fdfdfd] pb-[2px] pl-[7px] font-['Open_Sans',sans-serif] text-xs text-[#6d6d6d]">
      {menu.map((item) => (
        <button key={item}>{item}</button>
      ))}
    </nav>
    <Toolbar />
    <div className="flex min-h-0 flex-1">
      <ToolStrip />
      <Palette />
      <main className="ml-1 flex min-w-0 flex-1 flex-col">
        <div className="flex min-h-0 flex-1">
          <div className="relative min-w-0 flex-1 overflow-hidden bg-[#fffff5]">
            <Schematic />
            <FrontPanel />
            <Notes />
          </div>
          <div className="mr-[2px] flex w-[17px] flex-col items-center pl-[2px]">
            <button aria-label="Scroll up" className="flex h-[17px] items-center"><Chevron /></button>
            <div className="flex w-full flex-1 flex-col">
              <div className="mt-6 h-[26px] bg-[#cdcdcd]" />
            </div>
            <button aria-label="Scroll down" className="flex h-[17px] items-center">
              <Chevron turn="rotate-180" />
            </button>
          </div>
        </div>
        <div className="flex h-4 shrink-0 items-center pr-[19px]">
          <button aria-label="Scroll left" className="flex w-[17px] justify-center">
            <Chevron turn="-rotate-90" />
          </button>
          <div className="flex h-full flex-1">
            <div className="ml-2 h-full w-[92px] bg-[#cdcdcd]" />
          </div>
          <button aria-label="Scroll right" className="flex w-[17px] justify-center">
            <Chevron turn="rotate-90" />
          </button>
        </div>
        <div className="flex h-[19px] shrink-0 items-start">
          <svg width="14" height="17" fill="none" aria-hidden="true">
            <path d="M0 .5h8.500l5 16" stroke="#808080" />
          </svg>
          <button className="h-[17px] border-b border-[#808080] px-1 pt-px text-[11px] leading-4">
            Main circuit
          </button>
          <svg width="7" height="17" fill="none" aria-hidden="true">
            <path d="M.5 16.500l5-16H7" stroke="#808080" />
          </svg>
          <span className="flex-1 border-t border-[#808080]" />
        </div>
      </main>
    </div>
    <Taskbar />
  </div>
);

export default App;
